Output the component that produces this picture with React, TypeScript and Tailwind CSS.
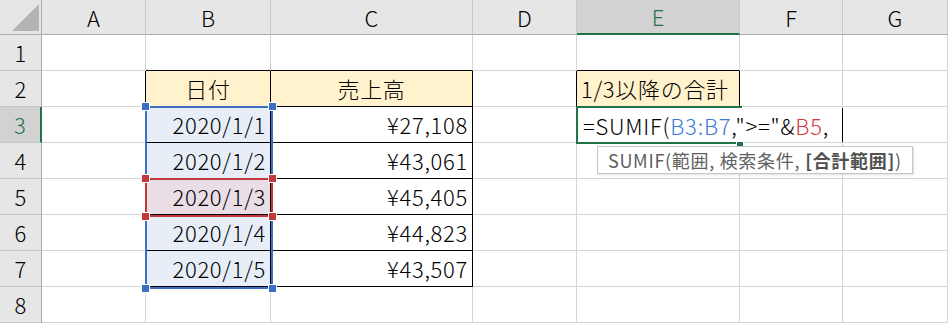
import React from 'react';

const COLS = ['A', 'B', 'C', 'D', 'E', 'F', 'G'];
const ROWS = [1, 2, 3, 4, 5, 6, 7, 8];

const sales: [string, string][] = [
  ['2020/1/1', '¥27,108'],
  ['2020/1/2', '¥43,061'],
  ['2020/1/3', '¥45,405'],
  ['2020/1/4', '¥44,823'],
  ['2020/1/5', '¥43,507'],
];

type Cell = { text: string; align: string; bg: string; right: string; bottom: string };

function getCell(row: number, col: string): Cell {
  let text = '';
  let align = 'justify-start';
  let bg = 'bg-white';
  let right = 'border-r-[#d4d4d4]';
  let bottom = 'border-b-[#d4d4d4]';
  const inTable = (col === 'B' || col === 'C') && row >= 2 && row <= 7;

  if (row === 2 && col === 'B') text = '日付';
  if (row === 2 && col === 'C') text = '売上高';
  if (row === 2 && col === 'E') text = '1/3以降の合計';
  if (row === 2 && (col === 'B' || col === 'C')) align = 'justify-center';
  if (row >= 3 && row <= 7 && (col === 'B' || col === 'C')) {
    text = sales[row - 3][col === 'B' ? 0 : 1];
    align = 'justify-end';
  }

  if (row === 2 && (col === 'B' || col === 'C' || col === 'E')) bg = 'bg-[#fff2cc]';
  if (col === 'B' && row >= 3 && row <= 7) bg = row === 5 ? 'bg-[#e9dee6]' : 'bg-[#e8eef8]';

  if (inTable || (col === 'A' && row >= 2 && row <= 7)) right = 'border-r-black';
  if ((col === 'D' || col === 'E') && row === 2) right = 'border-r-black';
  if ((col === 'B' || col === 'C') && row >= 1 && row <= 7) bottom = 'border-b-black';
  if (col === 'E' && (row === 1 || row === 2)) bottom = 'border-b-black';

  return { text, align, bg, right, bottom };
}

// range outline with the four corner handles
function RangeBox({ className, color }: { className: string; color: string }) {
  const h = `absolute w-[7px] h-[7px] outline outline-1 outline-white ${color}`;
  return (
    <div className={`absolute border-2 ${className}`}>
      <div className={`${h} -left-[5px] -top-[5px]`} />
      <div className={`${h} -right-[5px] -top-[5px]`} />
      <div className={`${h} -left-[5px] -bottom-[5px]`} />
      <div className={`${h} -right-[5px] -bottom-[5px]`} />
    </div>
  );
}

export default function App() {
  return (
    <div className="relative w-[948px] h-[324px] overflow-hidden bg-white font-['Noto_Sans_CJK_JP','Noto_Sans',sans-serif] text-black">
      <div className="grid grid-cols-[42px_104px_125px_202px_104px_163px_103px_105px] grid-rows-[35px_repeat(8,36px)]">
        {/* corner */}
        <div className="flex items-end justify-end bg-[#e6e6e6] border-r border-b border-r-[#ababab] border-b-[#ababab]">
          <svg width="41" height="34" viewBox="0 0 41 34">
            <polygon points="12,31 39,31 39,4" fill="#b4b4b4" />
          </svg>
        </div>

        {COLS.map((c) => (
          <div
            key={c}
            className={`flex items-center justify-center text-[22px] font-light border-r border-r-[#c8c8c8] ${
              c === 'E'
                ? 'bg-[#d2d2d2] text-[#217346] border-b-2 border-b-[#217346]'
                : 'bg-[#e6e6e6] border-b border-b-[#ababab]'
            }`}
          >
            {c}
          </div>
        ))}

        {ROWS.map((r) => (
          <React.Fragment key={r}>
            <div
              className={`flex items-center justify-center text-[22px] font-light border-b border-b-[#c8c8c8] ${
                r === 3
                  ? 'bg-[#d2d2d2] text-[#217346] border-r-2 border-r-[#217346]'
                  : 'bg-[#e6e6e6] border-r border-r-[#ababab]'
              }`}
            >
              {r}
            </div>
            {COLS.map((c) => {
              const cell = getCell(r, c);
              return (
                <div
                  key={c}
                  className={`flex items-center px-[4px] text-[22px] font-light tracking-[0.7px] whitespace-nowrap border-r border-b ${cell.align} ${cell.bg} ${cell.right} ${cell.bottom}`}
                >
                  {cell.text}
                </div>
              );
            })}
          </React.Fragment>
        ))}
      </div>

      {/* reference ranges B3:B7 and B5 */}
      <RangeBox className="left-[145px] top-[106px] w-[128px] h-[183px] border-[#3c6ec6]" color="bg-[#3c6ec6]" />
      <RangeBox className="left-[145px] top-[178px] w-[128px] h-[39px] border-[#c4383c]" color="bg-[#c4383c]" />

      {/* active cell E3 */}
      <div className="absolute left-[576px] top-[106px] w-[166px] h-[38px] border-2 border-[#217346]">
        <div className="absolute -right-[3px] -bottom-[4px] w-[6px] h-[5px] bg-[#217346] outline outline-1 outline-white" />
      </div>

      {/* in-cell editor */}
      <div className="absolute left-[578px] top-[108px] w-[265px] h-[34px] bg-white flex items-center pl-[5px] text-[22px] font-light tracking-[0.75px] whitespace-nowrap">
        <span>=SUMIF(</span>
        <span className="text-[#3b79d4]">B3:B7</span>
        <span>,"&gt;="&amp;</span>
        <span className="text-[#d0393f]">B5</span>
        <span>,</span>
        <span className="ml-auto w-px h-[34px] bg-black" />
      </div>

      {/* function tooltip */}
      <div className="absolute left-[597px] top-[146px] w-[316px] h-[28px] bg-white border border-[#c6c6c6] shadow-[1px_1px_2px_rgba(0,0,0,0.12)] flex items-center pl-[10px] text-[18px] tracking-[0.7px] text-[#606060] whitespace-nowrap">
        SUMIF(範囲, 検索条件, <span className="ml-[5px] font-bold text-[#505050]">[合計範囲]</span>)
      </div>
    </div>
  );
}
